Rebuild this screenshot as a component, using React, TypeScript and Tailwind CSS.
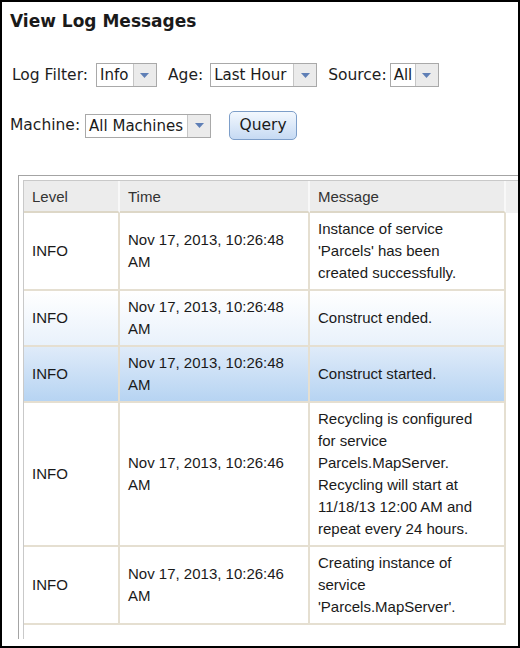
import type { ReactNode } from 'react'

type Row = {
  level: string
  time: string
  message: string
  variant?: 'hover' | 'selected'
}

const rows: Row[] = [
  { level: 'INFO', time: 'Nov 17, 2013, 10:26:48 AM', message: "Instance of service 'Parcels' has been created successfully." },
  { level: 'INFO', time: 'Nov 17, 2013, 10:26:48 AM', message: 'Construct ended.', variant: 'hover' },
  { level: 'INFO', time: 'Nov 17, 2013, 10:26:48 AM', message: 'Construct started.', variant: 'selected' },
  {
    level: 'INFO',
    time: 'Nov 17, 2013, 10:26:46 AM',
    message: 'Recycling is configured for service Parcels.MapServer. Recycling will start at 11/18/13 12:00 AM and repeat every 24 hours.',
  },
  { level: 'INFO', time: 'Nov 17, 2013, 10:26:46 AM', message: "Creating instance of service 'Parcels.MapServer'." },
]

function Select({ value, textWidth }: { value: string; textWidth: string }) {
  return (
    <div className="flex h-[24px] border border-[#a9a9a9] bg-white">
      <div className={`${textWidth} px-[3px] leading-[23px] text-[15px] text-[#1a1a1a]`}>{value}</div>
      <div className="flex w-[23px] items-center justify-center border-l border-[#c6c6c6] bg-[#ebebeb]">
        <svg width="9" height="5" viewBox="0 0 9 5">
          <path d="M0 0 L9 0 L4.5 5 Z" fill="#5f7fb6" />
        </svg>
      </div>
    </div>
  )
}

function Label({ children }: { children: ReactNode }) {
  return <span className="text-[15.5px] text-[#1e1e1e]">{children}</span>
}

export default function App() {
  return (
    <div
      className="h-[648px] w-[520px] overflow-hidden border-2 border-black bg-white pl-[8px] pt-[8px]"
      style={{ fontFamily: '"DejaVu Sans", Verdana, sans-serif' }}
    >
      <h1 className="h-[22px] text-[17px] font-bold leading-[22px] text-[#1a1a1a]">View Log Messages</h1>

      {/* filters */}
      <div className="ml-[2px] mt-[31px] flex items-center">
        <Label>Log Filter:</Label>
        <div className="ml-[8px]">
          <Select value="Info" textWidth="w-[36px]" />
        </div>
        <span className="ml-[11px]">
          <Label>Age:</Label>
        </span>
        <div className="ml-[7px]">
          <Select value="Last Hour" textWidth="w-[82px]" />
        </div>
        <span className="ml-[11px]">
          <Label>Source:</Label>
        </span>
        <div className="ml-[3px]">
          <Select value="All" textWidth="w-[24px]" />
        </div>
      </div>

      <div className="mt-[24px] flex items-center">
        <Label>Machine:</Label>
        <div className="ml-[5px]">
          <Select value="All Machines" textWidth="w-[101px]" />
        </div>
        <button className="ml-[18px] h-[29px] w-[68px] rounded-[5px] border border-[#7d9ec9] bg-gradient-to-b from-[#f3f8fe] to-[#c6daf3] text-[15.5px] text-[#1a1a1a]">
          Query
        </button>
      </div>

      {/* log grid */}
      <div className="ml-[8px] mt-[35px] h-[464px] w-[520px] border-l border-t border-[#a4a4a4] pl-[4px] pt-[4px]">
        <div
          className="h-full border-l border-t border-[#c9c9c9] text-[15px] leading-[22px] text-[#1a1a1a]"
          style={{ fontFamily: '"Liberation Sans", Arial, sans-serif' }}
        >
          <div className="flex h-[32px] bg-[#ececec] text-[#333]">
            <div className="w-[96px] border-b-2 border-r-2 border-b-[#ddd7c7] border-r-[#f8f8f8] px-[8px] leading-[31px]">Level</div>
            <div className="w-[190px] border-b-2 border-r-2 border-b-[#ddd7c7] border-r-[#f8f8f8] px-[8px] leading-[31px]">Time</div>
            <div className="w-[196px] border-b-2 border-r-2 border-b-[#ddd7c7] border-r-[#f8f8f8] px-[8px] leading-[31px]">Message</div>
            <div className="w-[14px] border-r border-[#b9b9b9] bg-[#efefef]" />
          </div>

          {rows.map((r, i) => (
            <div
              key={i}
              className={[
                'flex w-[482px]',
                r.variant === 'selected' && 'bg-gradient-to-b from-[#dfebf9] to-[#b5d3f2]',
                r.variant === 'hover' && 'bg-gradient-to-b from-white to-[#e8f1fb]',
              ]
                .filter(Boolean)
                .join(' ')}
            >
              <div className="flex w-[96px] items-center border-b-2 border-r-2 border-[#e5dfd1] px-[8px] py-[5px]">{r.level}</div>
              <div className="flex w-[190px] items-center border-b-2 border-r-2 border-[#e5dfd1] px-[8px] py-[5px]">{r.time}</div>
              <div className="flex w-[196px] items-center border-b-2 border-r-2 border-[#e5dfd1] px-[8px] py-[5px]">
                <div className="w-[168px]">{r.message}</div>
              </div>
            </div>
          ))}
        </div>
      </div>
    </div>
  )
}
